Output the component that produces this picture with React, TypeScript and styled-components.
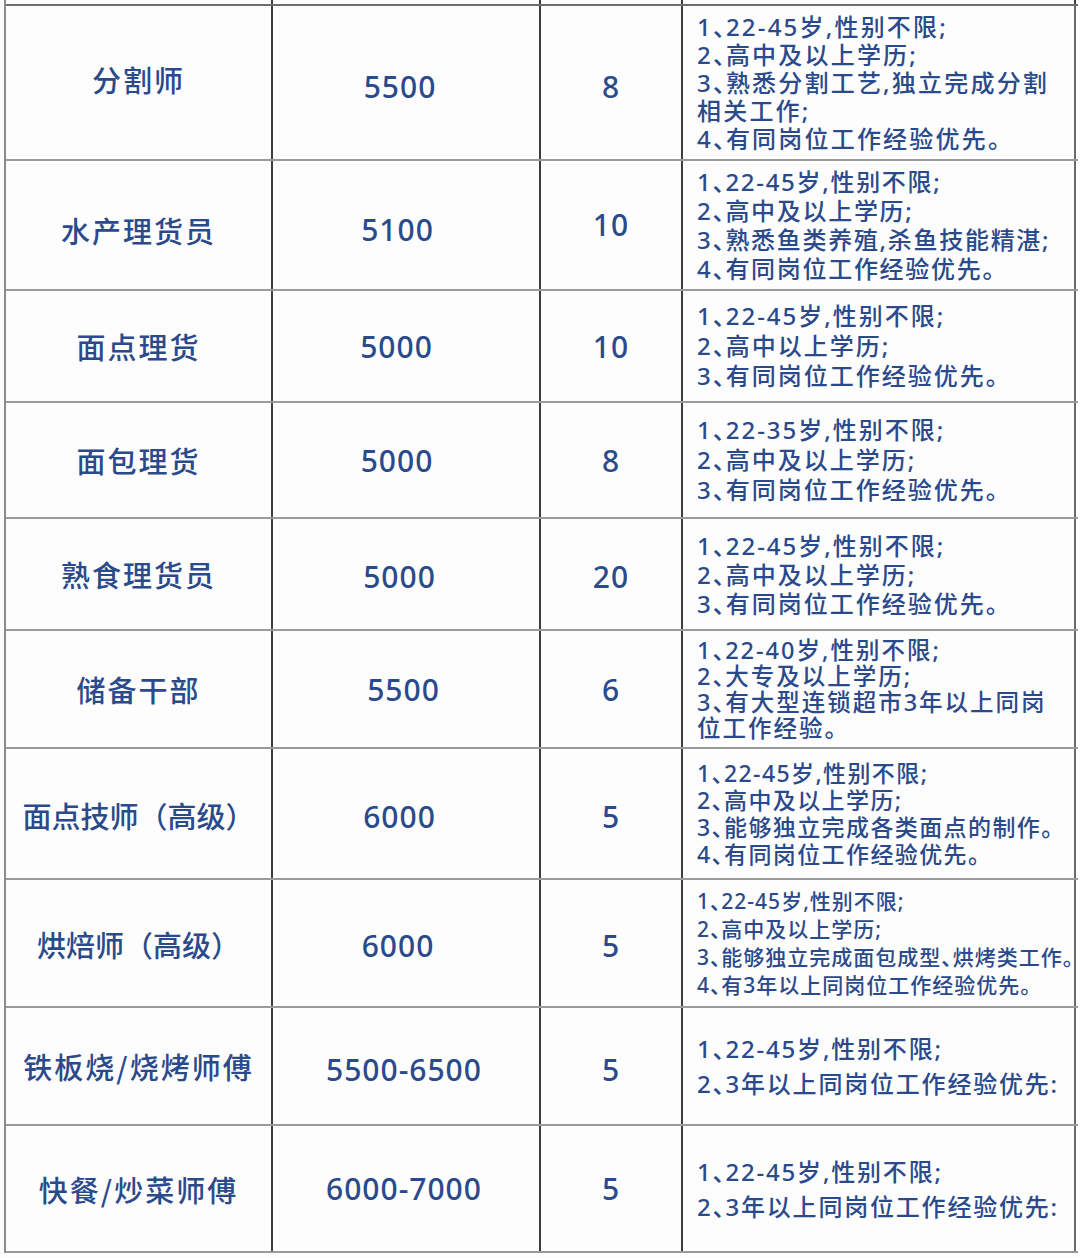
import React from "react";
import styled, { createGlobalStyle } from "styled-components";

const Global = createGlobalStyle`
  html, body { margin: 0; padding: 0; background: #fdfdfd; }
  body { font-family: "Noto Sans", "Noto Sans CJK SC", sans-serif; }
`;

const Page = styled.div`
  width: 1080px;
  height: 1258px;
  overflow: hidden;
  background: #fdfdfd;
`;

const Table = styled.div`
  margin-left: 4px;
  width: 1072px;
  border-left: 2px solid #8c8c8c;
`;

const COLS = "267px 268px 142px 393px";

const Row = styled.div<{ $h: number }>`
  display: grid;
  grid-template-columns: ${COLS};
  height: ${(p) => p.$h}px;
  box-sizing: border-box;
  border-bottom: 2px solid #9a9a9a;
`;

const Stub = styled(Row)`
  border-bottom: 2px solid #6e6e6e;
`;

const Cell = styled.div`
  box-sizing: border-box;
  border-right: 2px solid #3c3c3c;
  display: flex;
  align-items: center;
  justify-content: center;
  color: #2b4a8b;
  overflow: visible;
  min-width: 0;
`;

const Name = styled(Cell)<{ $ls: number; $dy: number }>`
  font-family: "Noto Sans CJK SC", sans-serif;
  font-size: 29px;
  font-weight: 500;
  letter-spacing: ${(p) => p.$ls}px;
  white-space: nowrap;
  padding-top: ${(p) => Math.max(0, p.$dy)}px;
  padding-bottom: ${(p) => Math.max(0, -p.$dy)}px;
`;

const Num = styled(Cell)<{ $dy: number; $dx: number }>`
  font-family: "Noto Sans", "Noto Sans CJK SC", sans-serif;
  font-size: 30px;
  font-weight: 500;
  letter-spacing: 1px;
  padding-top: ${(p) => Math.max(0, p.$dy)}px;
  padding-bottom: ${(p) => Math.max(0, -p.$dy)}px;
  padding-left: ${(p) => Math.max(0, p.$dx)}px;
  padding-right: ${(p) => Math.max(0, -p.$dx)}px;
`;

const Req = styled(Cell)<{ $fs: number; $lh: number; $ls: number }>`
  justify-content: flex-start;
  padding-left: 14px;
  font-family: "Noto Sans", "Noto Sans CJK SC", sans-serif;
  font-size: ${(p) => p.$fs}px;
  line-height: ${(p) => p.$lh}px;
  letter-spacing: ${(p) => p.$ls}px;
  font-weight: 500;
  border-right-color: #6a6a6a;
`;

const Lines = styled.div`
  display: flex;
  flex-direction: column;
`;

const Line = styled.span`
  white-space: nowrap;
`;

const Dun = styled.span`
  letter-spacing: -0.48em;
  margin-right: 0.02em;
`;

type Job = {
  name: string;
  ls: number;
  ndy: number;
  pay: string;
  count: string;
  h: number;
  fs: number;
  lh: number;
  rls: number;
  dy: number;
  cdy: number;
  dx: number;
  req: string[];
};

const jobs: Job[] = [
  {
    name: "分割师", ls: 2, ndy: -8, pay: "5500", count: "8", h: 155, fs: 24, lh: 28, rls: 2.2, dy: 8, cdy: 8, dx: -12,
    req: ["1、22-45岁,性别不限;", "2、高中及以上学历;", "3、熟悉分割工艺,独立完成分割", "相关工作;", "4、有同岗位工作经验优先。"],
  },
  {
    name: "水产理货员", ls: 2, ndy: 10, pay: "5100", count: "10", h: 130, fs: 24, lh: 29, rls: 1.7, dy: 8, cdy: -2, dx: -17,
    req: ["1、22-45岁,性别不限;", "2、高中及以上学历;", "3、熟悉鱼类养殖,杀鱼技能精湛;", "4、有同岗位工作经验优先。"],
  },
  {
    name: "面点理货", ls: 2, ndy: 0, pay: "5000", count: "10", h: 112, fs: 24, lh: 30, rls: 2, dy: 0, cdy: 0, dx: -19,
    req: ["1、22-45岁,性别不限;", "2、高中以上学历;", "3、有同岗位工作经验优先。"],
  },
  {
    name: "面包理货", ls: 2, ndy: 0, pay: "5000", count: "8", h: 116, fs: 24, lh: 30, rls: 2, dy: 0, cdy: 0, dx: -18,
    req: ["1、22-35岁,性别不限;", "2、高中及以上学历;", "3、有同岗位工作经验优先。"],
  },
  {
    name: "熟食理货员", ls: 2, ndy: 0, pay: "5000", count: "20", h: 112, fs: 24, lh: 29, rls: 2, dy: 4, cdy: 4, dx: -13,
    req: ["1、22-45岁,性别不限;", "2、高中及以上学历;", "3、有同岗位工作经验优先。"],
  },
  {
    name: "储备干部", ls: 2, ndy: 0, pay: "5500", count: "6", h: 118, fs: 23.5, lh: 26, rls: 2, dy: 0, cdy: 0, dx: -5,
    req: ["1、22-40岁,性别不限;", "2、大专及以上学历;", "3、有大型连锁超市3年以上同岗", "位工作经验。"],
  },
  {
    name: "面点技师（高级）", ls: 0, ndy: 2, pay: "6000", count: "5", h: 131, fs: 23, lh: 27, rls: 1.4, dy: 6, cdy: 6, dx: -13,
    req: ["1、22-45岁,性别不限;", "2、高中及以上学历;", "3、能够独立完成各类面点的制作。", "4、有同岗位工作经验优先。"],
  },
  {
    name: "烘焙师（高级）", ls: 0, ndy: 2, pay: "6000", count: "5", h: 128, fs: 21, lh: 28, rls: 1, dy: 4, cdy: 4, dx: -16,
    req: ["1、22-45岁,性别不限;", "2、高中及以上学历;", "3、能够独立完成面包成型、烘烤类工作。", "4、有3年以上同岗位工作经验优先。"],
  },
  {
    name: "铁板烧/烧烤师傅", ls: 2, ndy: 0, pay: "5500-6500", count: "5", h: 118, fs: 24, lh: 35, rls: 1.8, dy: 6, cdy: 6, dx: -4,
    req: ["1、22-45岁,性别不限;", "2、3年以上同岗位工作经验优先:"],
  },
  {
    name: "快餐/炒菜师傅", ls: 2, ndy: 0, pay: "6000-7000", count: "5", h: 127, fs: 24, lh: 35, rls: 1.8, dy: 0, cdy: 0, dx: -4,
    req: ["1、22-45岁,性别不限;", "2、3年以上同岗位工作经验优先:"],
  },
];

function renderLine(text: string) {
  const parts = text.split("、");
  const out: React.ReactNode[] = [];
  parts.forEach((p, i) => {
    if (i > 0) out.push(<Dun key={`d${i}`}>、</Dun>);
    out.push(<React.Fragment key={`t${i}`}>{p}</React.Fragment>);
  });
  return out;
}

export default function App() {
  return (
    <Page>
      <Global />
      <Table>
        <Stub $h={6}>
          <Cell />
          <Cell />
          <Cell />
          <Cell />
        </Stub>
        {jobs.map((j) => (
          <Row key={j.name} $h={j.h}>
            <Name $ls={j.ls} $dy={j.ndy}>{j.name}</Name>
            <Num $dy={j.dy} $dx={j.dx}>{j.pay}</Num>
            <Num $dy={j.cdy} $dx={0}>{j.count}</Num>
            <Req $fs={j.fs} $lh={j.lh} $ls={j.rls}>
              <Lines>
                {j.req.map((l) => (
                  <Line key={l}>{renderLine(l)}</Line>
                ))}
              </Lines>
            </Req>
          </Row>
        ))}
      </Table>
    </Page>
  );
}
